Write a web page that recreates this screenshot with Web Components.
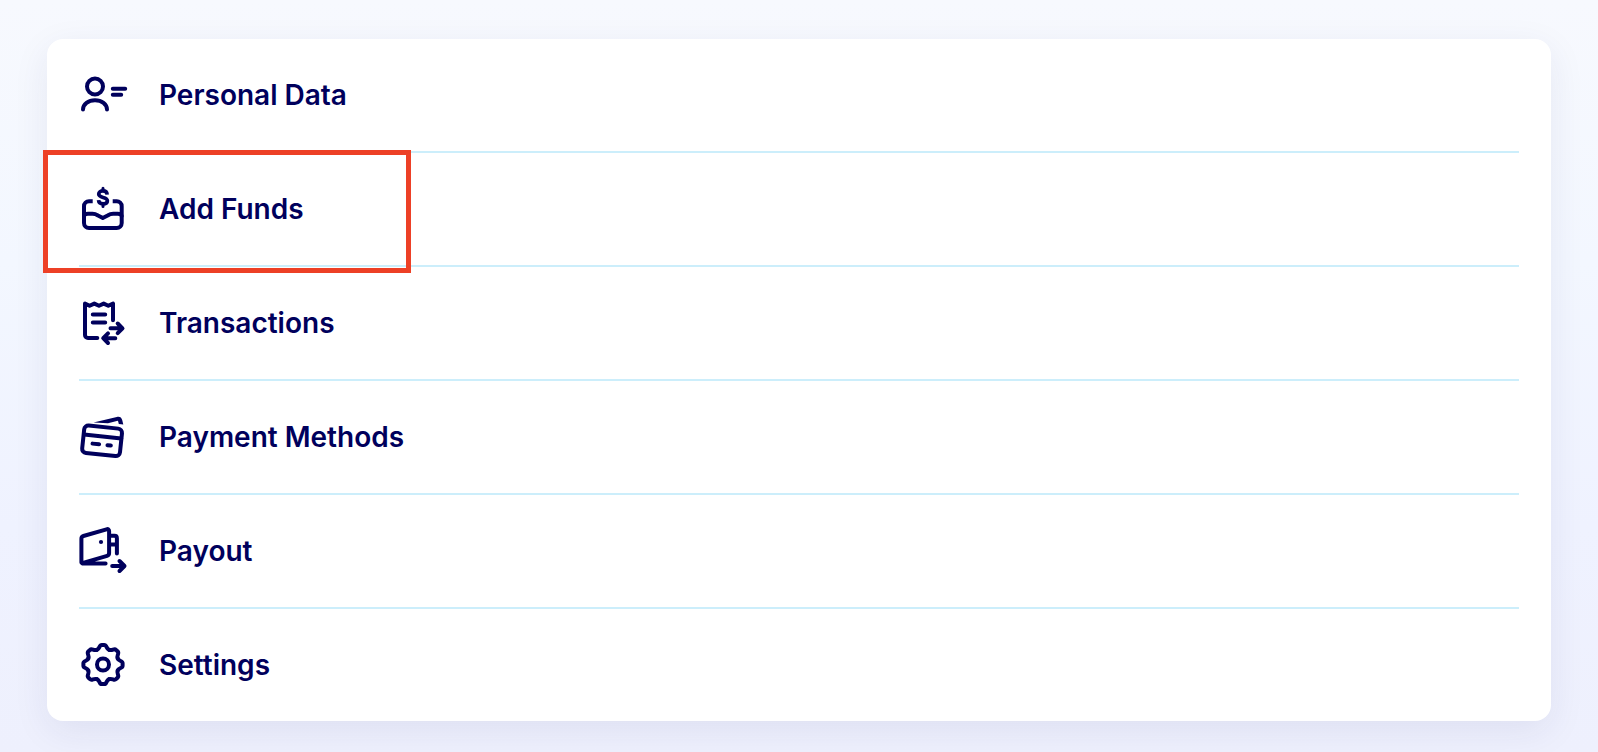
<!DOCTYPE html>
<html lang="en">
<head>
<meta charset="utf-8">
<meta name="viewport" content="width=device-width, initial-scale=1">
<title>Account</title>
<style>
    body {
        margin: 0;
        min-height: 100vh;
        background: linear-gradient(#f7f9fe, #f3f7ff 35%, #eff2ff 70%, #eef0fd);
        color: #00005c;
        font-family: Inter, "Liberation Sans", sans-serif;
    }
</style>
</head>
<body>

<account-menu>
    <menu-item icon="person" href="#personal-data">Personal Data</menu-item>
    <menu-item icon="funds" href="#add-funds" marked>Add Funds</menu-item>
    <menu-item icon="transactions" href="#transactions">Transactions</menu-item>
    <menu-item icon="cards" href="#payment-methods">Payment Methods</menu-item>
    <menu-item icon="payout" href="#payout">Payout</menu-item>
    <menu-item icon="gear" href="#settings">Settings</menu-item>
</account-menu>

<script>
const icons = {
    person: `
        <circle cx="16" cy="15.5" r="8"/>
        <path d="M4 38.6C4 33 9.3 29.3 16 29.3S28 33 28 38.6M33.8 17.7h12.4M33.8 23.7h8.4"/>`,
    funds: `
        <path stroke-linecap="butt" d="M13.7 16.3H10a5 5 0 0 0-5 5V38a5 5 0 0 0 5 5h27.7a5 5 0 0 0 5-5V21.3a5 5 0 0 0-5-5h-4"/>
        <path d="M5 31C5.5 29.3 7 28.8 9 28.8h4.5c2.2 0 3.700.6 5.500 1.700L23.800 33l4.800-2.500c1.800-1.100 3.400-1.700 5.600-1.700h4.500c2 0 3.500.5 4 2.200"/>
        <path stroke-width="3.6" stroke-linecap="butt" d="M28.2 9.6C28 7.2 26.4 5.900 24 5.900s-4.300 1.200-4.300 3.200c0 4.400 8.700 2.200 8.700 6.600 0 2-1.800 3.200-4.400 3.200s-4.300-1.400-4.500-3.800"/>
        <path stroke-width="3" d="M24 3.300v2M24 19.500v2"/>`,
    transactions: `
        <path d="M18.300 39H9a3 3 0 0 1-3-3V4.600l4.600 2.200 4.700-2.200L20 6.800l4.700-2.200 4.600 2.200L34 4.600v16.700M13.800 15.500h12.400M13.800 23.400h12.400"/>
        <path d="M31.500 29.300h10.700M38.700 24.500l4.800 4.800-4.800 4.800M36.300 39.200H25.500M29 34.400l-4.800 4.800L29 44"/>`,
    cards: `
        <g transform="rotate(6 23 27.7)">
            <rect x="4.1" y="14" width="38" height="27.6" rx="4.2"/>
            <path d="M4.500 23.400h37.400"/>
            <path d="M13.900 31.600h6.600M28.900 31.600h3.400"/>
        </g>
        <path fill="currentColor" stroke="none" d="M14.500 9.400 37.800 3.900C40.800 3.200 42.500 4.400 43.200 7L44.300 11.500 39.800 10.900 39.200 8.600C39 7.900 38.600 7.700 37.800 7.900L29 10.300Z"/>`,
    payout: `
        <path d="M2.400 35.500V11.700c0-1.500.6-2.300 2-2.700L27.500 2.300c1.600-.5 2.600.1 2.600 1.800v22c0 1.500-.6 2.300-2 2.700L4.900 35.600c-1.500.4-2.500 0-2.500-1.700 0 2 .9 2.700 2.600 2.700h21.600"/>
        <circle cx="22" cy="15" r="2.1" fill="currentColor" stroke="none"/>
        <path d="M31 8.800h4.500c1.600 0 2.400.8 2.400 2.400v15.200M31 17.600h6.500"/>
        <path d="M33.200 39h11.600M40.500 34l5 5-5 5"/>`,
    gear: `
        <g transform="translate(24 23.5)">
            <circle r="6"/>
            ${[0, 45, 90, 135, 180, 225, 270, 315].map(angle =>
                `<path transform="rotate(${angle})" d="M-6.1-14.7C-2.8-16-4-19.600-1.200-19.600H1.200C4-19.600 2.800-16 6.100-14.700"/>`
            ).join('')}
        </g>`
};

class MenuIcon extends HTMLElement {

    constructor() {
        super();
        this.attachShadow({ mode: 'open' });
    }

    connectedCallback() {
        this.shadowRoot.innerHTML = `
        <style>
            :host {
                display: block;
                flex: none;
                width: 48px;
                height: 48px;
            }
            svg {
                display: block;
                overflow: visible;
            }
        </style>
        <svg width="48" height="48" viewBox="0 0 48 48" fill="none" stroke="currentColor" stroke-width="4" stroke-linecap="round" stroke-linejoin="round" aria-hidden="true">
            ${icons[this.getAttribute('name')]}
        </svg>`;
    }
}

class MenuItem extends HTMLElement {

    constructor() {
        super();
        this.attachShadow({ mode: 'open' });
    }

    connectedCallback() {
        this.shadowRoot.innerHTML = `
        <style>
            :host {
                display: block;
                position: relative;
                border-bottom: 2px solid #cceefb;
            }
            :host(:last-child) {
                border-bottom: 0;
            }
            a {
                display: flex;
                align-items: center;
                gap: 32px;
                padding: 32px 0;
                color: inherit;
                font-size: 28px;
                font-weight: 600;
                line-height: 30px;
                text-decoration: none;
            }
            /* frame drawn over the row and the dividers next to it */
            :host([marked])::after {
                content: "";
                position: absolute;
                z-index: 1;
                top: -3px;
                left: -36px;
                bottom: -8px;
                width: 368px;
                box-sizing: border-box;
                border: 5px solid #ed4026;
                pointer-events: none;
            }
        </style>
        <a href="${this.getAttribute('href')}">
            <menu-icon name="${this.getAttribute('icon')}"></menu-icon>
            <span><slot></slot></span>
        </a>`;
    }
}

class AccountMenu extends HTMLElement {

    constructor() {
        super();
        this.attachShadow({ mode: 'open' });
    }

    connectedCallback() {
        this.shadowRoot.innerHTML = `
        <style>
            :host {
                display: block;
                padding: 39px 47px 31px;
            }
            nav {
                padding: 0 32px;
                border-radius: 16px;
                background: #fff;
                box-shadow: 0 10px 36px rgba(32, 40, 100, 0.08);
            }
        </style>
        <nav aria-label="Account">
            <slot></slot>
        </nav>`;
    }
}

customElements.define('menu-icon', MenuIcon);
customElements.define('menu-item', MenuItem);
customElements.define('account-menu', AccountMenu);
</script>
</body>
</html>
